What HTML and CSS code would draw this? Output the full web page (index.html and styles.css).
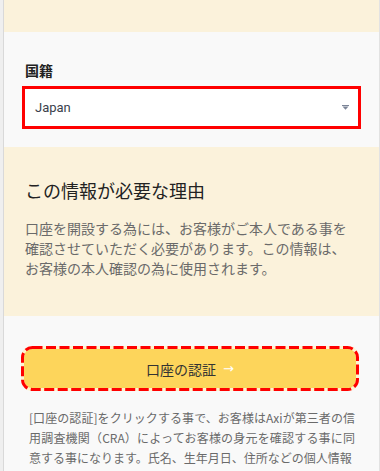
FILE: index.html
```html
<!DOCTYPE html>
<html lang="ja">
<head>
<meta charset="utf-8">
<link rel="stylesheet" href="styles.css">
</head>
<body>
<div class="page">
  <div class="band band-top"></div>
  <section class="band band-form">
    <label class="field-label">国籍</label>
    <div class="select">
      <span class="select-value">Japan</span>
      <svg class="select-caret" width="7" height="5" viewBox="0 0 7 5"><rect x="0" y="0" width="7" height="1" fill="#7b8497"/><path d="M0.5 1.5 H6.5 L3.5 4.8 Z" fill="#7b8497"/></svg>
    </div>
  </section>
  <section class="band band-info">
    <h2 class="info-title">この情報が必要な理由</h2>
    <p class="info-text">口座を開設する為には、お客様がご本人である事を確認させていただく必要があります。この情報は、お客様の本人確認の為に使用されます。</p>
  </section>
  <section class="band band-action">
    <button class="verify-btn"><span>口座の認証</span><span class="arrow">→</span><svg class="focus-ring" width="100%" height="100%" preserveAspectRatio="none"><rect x="1.5" y="1.5" width="calc(100% - 3px)" height="calc(100% - 3px)" rx="10" ry="10" fill="none" stroke="#ff0000" stroke-width="3" stroke-dasharray="10 3.5"/></svg></button>
    <p class="disclaimer">[口座の認証]をクリックする事で、お客様はAxiが第三者の信用調査機関（CRA）によってお客様の身元を確認する事に同意する事になります。氏名、生年月日、住所などの個人情報</p>
  </section>
</div>
</body>
</html>
```
FILE: styles.css
```css
html, body {
  margin: 0;
  padding: 0;
}
body {
  background: #efefef;
  font-family: Roboto, "Noto Sans CJK JP", sans-serif;
  color: #333;
  height: 471px;
  overflow: hidden;
}
.page {
  margin-left: 3px;
  border-left: 1px solid #d9d9d9;
  border-right: 1px solid #e2e2e2;
  background: #f9f9f9;
  min-height: 471px;
}
.band {
  padding: 0 18px 0 18px;
}
.band-top {
  height: 32px;
  background: #fbf2db;
}
.band-form {
  background: #f9f9f9;
  padding-top: 28px;
  padding-bottom: 18px;
}
.field-label {
  display: block;
  padding-left: 3px;
  font-family: "Noto Sans CJK JP", sans-serif;
  font-weight: 700;
  font-size: 14px;
  line-height: 20px;
  color: #222;
  margin-bottom: 6px;
}
.select {
  height: 43px;
  box-sizing: border-box;
  border: 3px solid #ff0000;
  background: #fff;
  display: flex;
  align-items: center;
  justify-content: space-between;
  padding: 0 9px 0 10px;
}
.select-value {
  font-size: 13px;
  color: #3a3f4c;
}
.select-caret {
  display: block;
}
.band-info {
  background: #fbf2db;
  padding-top: 30px;
  padding-bottom: 38px;
  padding-left: 21px;
  padding-right: 22px;
}
.info-title {
  margin: 0 0 15px;
  font-family: "Noto Sans CJK JP", sans-serif;
  font-weight: 400;
  font-size: 18px;
  line-height: 26px;
  color: #222;
}
.info-text {
  margin: 0;
  font-family: "Noto Sans CJK JP", sans-serif;
  font-size: 14px;
  line-height: 20px;
  color: #6a6a6a;
}
.band-action {
  background: #f9f9f9;
  padding-top: 30px;
  padding-left: 17px;
  padding-right: 20px;
}
.verify-btn {
  position: relative;
  display: flex;
  align-items: center;
  justify-content: center;
  gap: 7px;
  width: 100%;
  height: 45px;
  box-sizing: border-box;
  border: 3px solid #fff4cf;
  border-radius: 11px;
  background: #fdd55b;
  font-family: "Noto Sans CJK JP", sans-serif;
  font-size: 14px;
  color: #333;
  padding: 0;
  margin: 0;
}
.verify-btn .arrow {
  color: #fff;
  font-family: "DejaVu Sans", sans-serif;
  font-size: 13px;
}
.focus-ring {
  position: absolute;
  top: -3px;
  left: -3px;
  width: calc(100% + 6px);
  height: calc(100% + 6px);
  overflow: visible;
}
.disclaimer {
  margin: 17px 0 0;
  padding: 0 4px 0 8px;
  font-family: "Noto Sans CJK JP", sans-serif;
  font-size: 12px;
  line-height: 20px;
  color: #6a6a6a;
  text-align: justify;
}
```
